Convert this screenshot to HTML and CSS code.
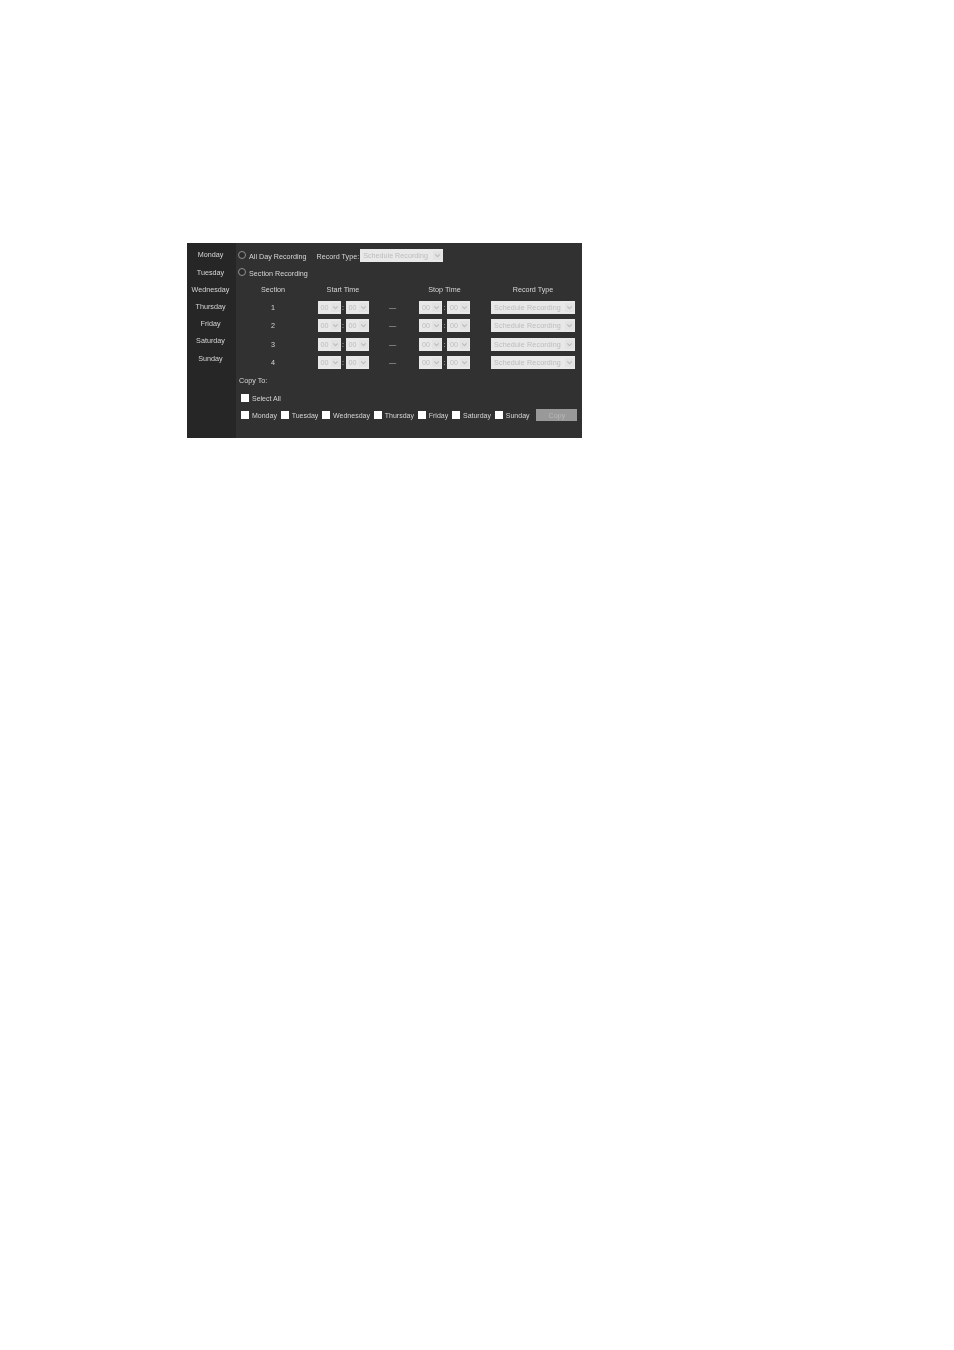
FILE: index.html
```html
<!DOCTYPE html>
<html lang="en">
<head>
    <meta charset="UTF-8">
    <title>Recording Schedule</title>
    <link rel="stylesheet" href="styles.css">
</head>
<body>
    <svg class="defs" width="0" height="0">
        <symbol id="chevron" viewBox="0 0 8 8">
            <path d="M2 3 L4 5 L6 3" fill="none" stroke="#bdbdbd" stroke-width="1"/>
        </symbol>
    </svg>

    <div class="panel">
        <div class="days">
            <div class="day">Monday</div>
            <div class="day">Tuesday</div>
            <div class="day">Wednesday</div>
            <div class="day">Thursday</div>
            <div class="day">Friday</div>
            <div class="day">Saturday</div>
            <div class="day">Sunday</div>
        </div>

        <div class="main">
            <div class="mode-row">
                <span class="radio"></span>
                <span class="mode-label">All Day Recording</span>
                <span class="type-label">Record Type:</span>
                <div class="select select-top">Schedule Recording<svg class="arrow"><use href="#chevron"/></svg></div>
            </div>
            <div class="mode-row">
                <span class="radio"></span>
                <span class="mode-label">Section Recording</span>
            </div>

            <div class="table">
                <div class="head">Section</div>
                <div class="head">Start Time</div>
                <div class="head"></div>
                <div class="head">Stop Time</div>
                <div class="head type-cell">Record Type</div>

                <div class="cell">1</div>
                <div class="cell"><div class="select select-time">00<svg class="arrow"><use href="#chevron"/></svg></div><i>:</i><div class="select select-time">00<svg class="arrow"><use href="#chevron"/></svg></div></div>
                <div class="cell dash">—</div>
                <div class="cell"><div class="select select-time">00<svg class="arrow"><use href="#chevron"/></svg></div><i>:</i><div class="select select-time">00<svg class="arrow"><use href="#chevron"/></svg></div></div>
                <div class="cell type-cell"><div class="select select-type">Schedule Recording<svg class="arrow"><use href="#chevron"/></svg></div></div>

                <div class="cell">2</div>
                <div class="cell"><div class="select select-time">00<svg class="arrow"><use href="#chevron"/></svg></div><i>:</i><div class="select select-time">00<svg class="arrow"><use href="#chevron"/></svg></div></div>
                <div class="cell dash">—</div>
                <div class="cell"><div class="select select-time">00<svg class="arrow"><use href="#chevron"/></svg></div><i>:</i><div class="select select-time">00<svg class="arrow"><use href="#chevron"/></svg></div></div>
                <div class="cell type-cell"><div class="select select-type">Schedule Recording<svg class="arrow"><use href="#chevron"/></svg></div></div>

                <div class="cell">3</div>
                <div class="cell"><div class="select select-time">00<svg class="arrow"><use href="#chevron"/></svg></div><i>:</i><div class="select select-time">00<svg class="arrow"><use href="#chevron"/></svg></div></div>
                <div class="cell dash">—</div>
                <div class="cell"><div class="select select-time">00<svg class="arrow"><use href="#chevron"/></svg></div><i>:</i><div class="select select-time">00<svg class="arrow"><use href="#chevron"/></svg></div></div>
                <div class="cell type-cell"><div class="select select-type">Schedule Recording<svg class="arrow"><use href="#chevron"/></svg></div></div>

                <div class="cell">4</div>
                <div class="cell"><div class="select select-time">00<svg class="arrow"><use href="#chevron"/></svg></div><i>:</i><div class="select select-time">00<svg class="arrow"><use href="#chevron"/></svg></div></div>
                <div class="cell dash">—</div>
                <div class="cell"><div class="select select-time">00<svg class="arrow"><use href="#chevron"/></svg></div><i>:</i><div class="select select-time">00<svg class="arrow"><use href="#chevron"/></svg></div></div>
                <div class="cell type-cell"><div class="select select-type">Schedule Recording<svg class="arrow"><use href="#chevron"/></svg></div></div>
            </div>

            <div class="copy-label">Copy To:</div>
            <div class="check-row select-all">
                <span class="check"><span class="box"></span>Select All</span>
            </div>
            <div class="check-row">
                <span class="check"><span class="box"></span>Monday</span>
                <span class="check"><span class="box"></span>Tuesday</span>
                <span class="check"><span class="box"></span>Wednesday</span>
                <span class="check"><span class="box"></span>Thursday</span>
                <span class="check"><span class="box"></span>Friday</span>
                <span class="check"><span class="box"></span>Saturday</span>
                <span class="check"><span class="box"></span>Sunday</span>
                <button class="copy-btn">Copy</button>
            </div>
        </div>
    </div>
</body>
</html>
```

FILE: styles.css
```css
body {
    margin: 0;
    background-color: #fff;
    font-family: "Liberation Sans", Arial, sans-serif;
}
.defs {
    display: block;
    height: 0;
}
.panel {
    display: flex;
    width: 395px;
    height: 195px;
    margin: 243px 0 0 187px;
    background-color: #313131;
    color: #d6d6d6;
    font-size: 7.2px;
    filter: blur(0.35px);
}
.days {
    flex: none;
    box-sizing: border-box;
    width: 49px;
    padding: 3.4px 2px 0 0;
    background-color: #262626;
}
.day {
    height: 17.2px;
    line-height: 17.2px;
    text-align: center;
}
.main {
    flex: 1;
    min-width: 0;
    padding-top: 4px;
}
.mode-row {
    display: flex;
    align-items: center;
    height: 17.2px;
    padding-left: 2px;
}
.radio {
    flex: none;
    width: 6px;
    height: 6px;
    margin-top: -1px;
    border: 1px solid #929292;
    border-radius: 50%;
    background-color: #2b2b2b;
}
.mode-label {
    margin-left: 3px;
    padding-top: 1px;
}
.type-label {
    margin-left: 10px;
    padding-top: 1px;
}
.select {
    position: relative;
    box-sizing: border-box;
    height: 13px;
    line-height: 13px;
    padding-left: 3px;
    background-color: #e8e8e8;
    color: #bcbcbc;
    white-space: nowrap;
    overflow: hidden;
}
.arrow {
    position: absolute;
    right: 1px;
    top: 2px;
    width: 9px;
    height: 9px;
    background-color: #e2e2e2;
}
.select-top {
    width: 83px;
    margin: -1px 0 0 1px;
}
.select-time {
    width: 23px;
}
.select-type {
    width: 84px;
    letter-spacing: 0.12px;
}
.table {
    display: grid;
    grid-template-columns: 74px 66px 33px 71px 102px;
    grid-template-rows: 16.8px repeat(4, 18.4px);
}
.head {
    display: flex;
    align-items: center;
    justify-content: center;
}
.cell {
    display: flex;
    align-items: center;
    justify-content: center;
}
.cell i {
    width: 5px;
    text-align: center;
    font-style: normal;
}
.dash {
    color: #bdbdbd;
}
.type-cell {
    padding: 0 7px 0 11px;
}
.copy-label {
    height: 18.2px;
    line-height: 18.2px;
    padding-left: 3px;
}
.check-row {
    display: flex;
    align-items: center;
    height: 17px;
    padding-left: 5px;
    gap: 3.8px;
}
.check {
    display: flex;
    align-items: center;
    gap: 3px;
    font-size: 7px;
}
.box {
    flex: none;
    width: 8px;
    height: 8px;
    background-color: #fff;
}
.copy-btn {
    flex: none;
    width: 41px;
    height: 12px;
    margin-left: 3px;
    padding: 0;
    border: none;
    background-color: #999;
    color: #b8b8b8;
    font-family: inherit;
    font-size: 7.2px;
}
```
